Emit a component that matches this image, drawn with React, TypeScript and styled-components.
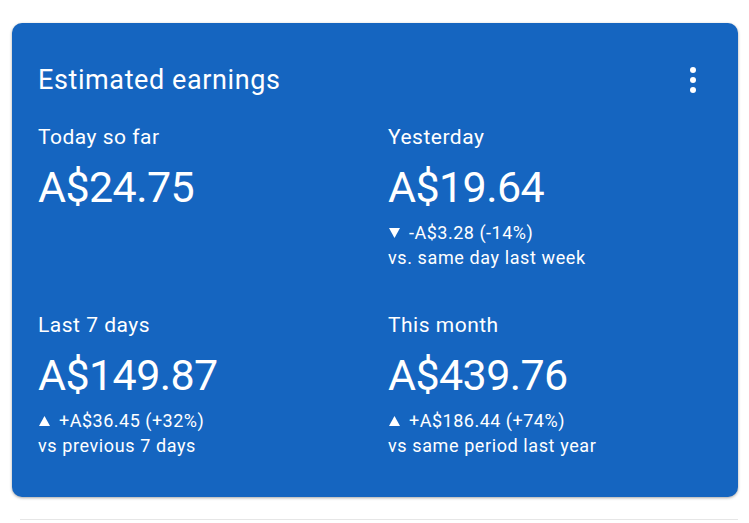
import * as React from 'react'
import styled, { createGlobalStyle } from 'styled-components'

const GlobalStyle = createGlobalStyle`
  html, body {
    margin: 0;
    padding: 0;
    background: #ffffff;
    font-family: Roboto, "Liberation Sans", sans-serif;
  }
`

const Page = styled.div`
  width: 749px;
  height: 523px;
  padding: 23px 11px 0 12px;
  box-sizing: border-box;
  overflow: hidden;
`

const Card = styled.div`
  background: #1565c0;
  border-radius: 10px;
  box-shadow: 0 1px 3px rgba(0, 0, 0, 0.35);
  color: #ffffff;
  padding: 42px 26px 40px 26px;
  height: 474px;
  box-sizing: border-box;
`

const Header = styled.div`
  display: flex;
  align-items: center;
  justify-content: space-between;
  height: 30px;
`

const Title = styled.h2`
  margin: 0;
  font-family: Roboto, "Liberation Sans", sans-serif;
  font-weight: 400;
  font-size: 27px;
  letter-spacing: 0.6px;
`

const MenuButton = styled.div`
  display: flex;
  flex-direction: column;
  align-items: center;
  gap: 4px;
  margin-right: 16px;
  width: 6px;
`

const Dot = styled.span`
  width: 6px;
  height: 6px;
  border-radius: 50%;
  background: #ffffff;
`

const Grid = styled.div`
  display: grid;
  grid-template-columns: 350px 1fr;
  grid-auto-rows: 188px;
  margin-top: 29px;
`

const Stat = styled.div`
  display: flex;
  flex-direction: column;
`

const Label = styled.div`
  font-size: 21px;
  letter-spacing: 0.5px;
  line-height: 26px;
`

const Value = styled.div`
  font-size: 43px;
  line-height: 52px;
  margin-top: 11px;
  letter-spacing: -0.6px;
`

const Delta = styled.div`
  display: flex;
  align-items: center;
  font-size: 18px;
  letter-spacing: 0.5px;
  line-height: 25px;
  margin-top: 7px;
`

const Compare = styled.div`
  font-size: 18px;
  letter-spacing: 0.6px;
  line-height: 25px;
`

const Arrow = styled.svg`
  width: 11px;
  height: 10px;
  margin: 0 9px 0 1px;
  fill: #ffffff;
`

const NextCard = styled.div`
  margin-top: 22px;
  height: 20px;
  border-top: 1px solid #e6e6e6;
  margin-left: 8px;
`

type StatItem = {
  label: string
  value: string
  up?: boolean
  delta?: string
  compare?: string
}

const stats: StatItem[] = [
  { label: 'Today so far', value: 'A$24.75' },
  { label: 'Yesterday', value: 'A$19.64', up: false, delta: '-A$3.28 (-14%)', compare: 'vs. same day last week' },
  { label: 'Last 7 days', value: 'A$149.87', up: true, delta: '+A$36.45 (+32%)', compare: 'vs previous 7 days' },
  { label: 'This month', value: 'A$439.76', up: true, delta: '+A$186.44 (+74%)', compare: 'vs same period last year' },
]

export default function App() {
  return (
    <Page>
      <GlobalStyle />
      <Card>
        <Header>
          <Title>Estimated earnings</Title>
          <MenuButton>
            <Dot />
            <Dot />
            <Dot />
          </MenuButton>
        </Header>
        <Grid>
          {stats.map(s => (
            <Stat key={s.label}>
              <Label>{s.label}</Label>
              <Value>{s.value}</Value>
              {s.delta && (
                <Delta>
                  <Arrow viewBox="0 0 11 10">
                    {s.up ? <polygon points="5.5,0 11,10 0,10" /> : <polygon points="0,0 11,0 5.5,10" />}
                  </Arrow>
                  {s.delta}
                </Delta>
              )}
              {s.compare && <Compare>{s.compare}</Compare>}
            </Stat>
          ))}
        </Grid>
      </Card>
      <NextCard />
    </Page>
  )
}
